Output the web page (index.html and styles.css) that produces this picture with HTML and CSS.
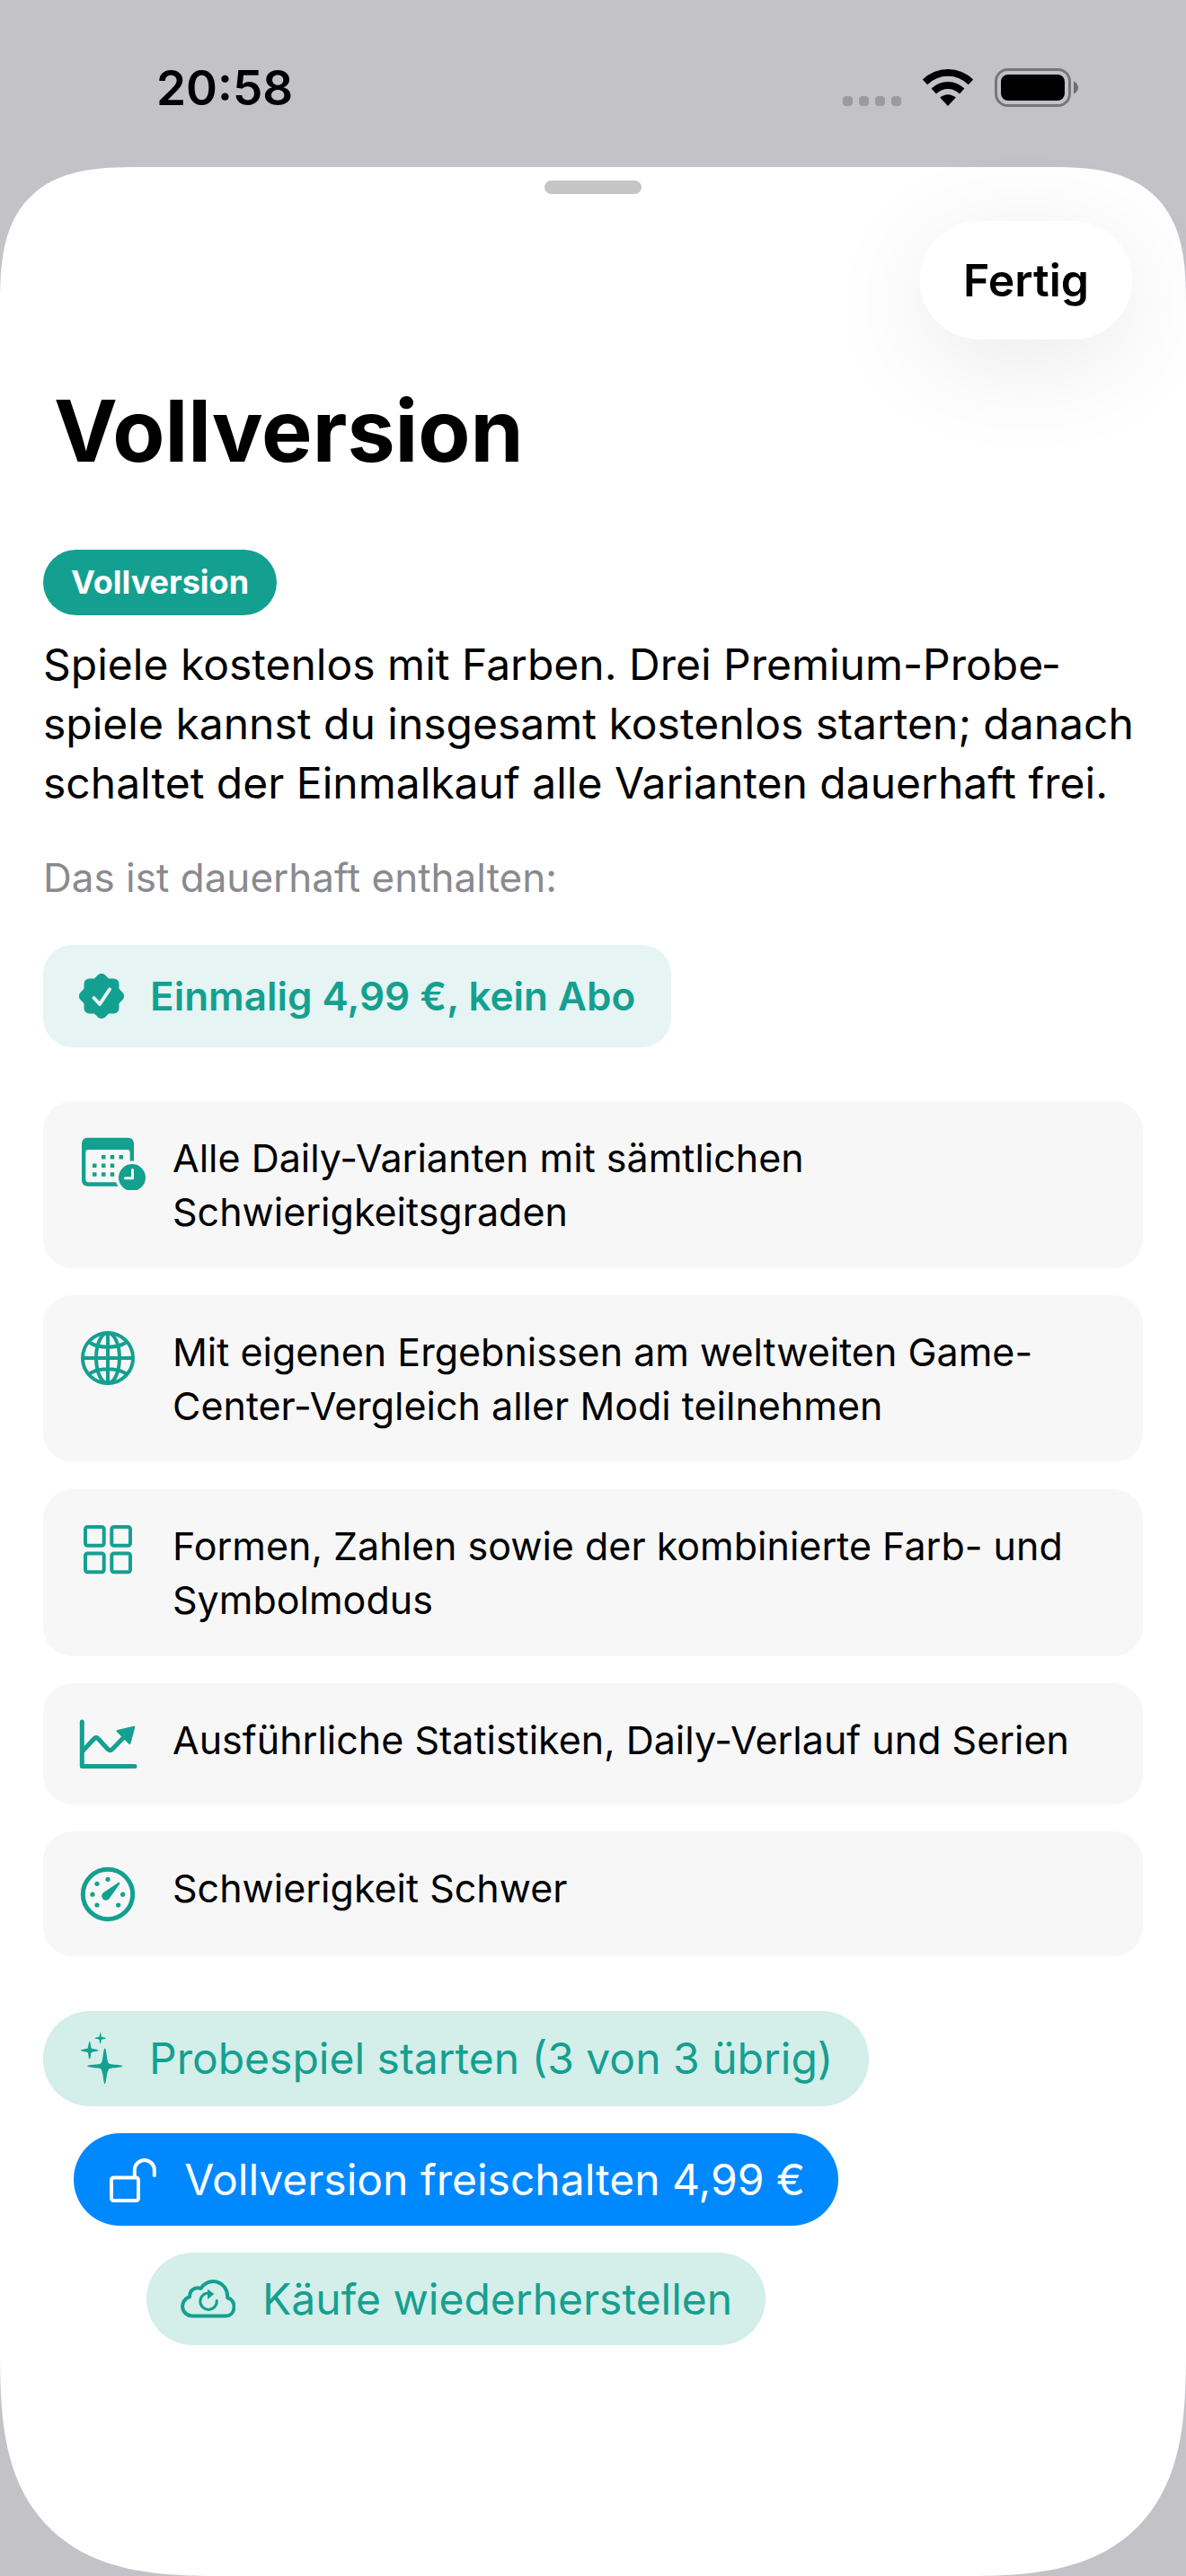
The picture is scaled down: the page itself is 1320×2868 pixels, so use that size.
FILE: index.html
```html
<!doctype html>
<html lang="de">
<head>
    <meta charset="UTF-8">
    <meta name="viewport" content="width=device-width, initial-scale=1">
    <title>Vollversion</title>
    <link rel="stylesheet" href="styles.css">
</head>
<body>
<div class="status-bar">
    <span class="time">20:58</span>
    <div class="status-icons">
        <svg class="dots" width="65" height="42" viewBox="0 0 65 42">
            <rect x="0" y="31" width="11" height="11" rx="4"/>
            <rect x="18" y="31" width="11" height="11" rx="4"/>
            <rect x="36" y="31" width="11" height="11" rx="4"/>
            <rect x="54" y="31" width="11" height="11" rx="4"/>
        </svg>
        <svg class="wifi" width="58" height="42" viewBox="0 0 58 42">
            <path d="M0.8 12.6A40 40 0 0 1 57.2 12.6L51.8 18.2A32.5 32.5 0 0 0 6.2 18.2Z"/>
            <path d="M10.6 22.6A26 26 0 0 1 47.4 22.6L42 28.4A18.5 18.5 0 0 0 16 28.4Z"/>
            <path d="M20.3 32.8A12.5 12.5 0 0 1 37.7 32.8L29 42Z"/>
        </svg>
        <svg class="battery" width="93" height="43" viewBox="0 0 93 43">
            <rect class="case" x="1.5" y="1.5" width="82" height="40" rx="13"/>
            <rect x="7" y="7" width="71" height="29" rx="8"/>
            <path class="tip" d="M88 14.5C94.5 17 94.5 26 88 28.5Z"/>
        </svg>
    </div>
</div>
<main class="sheet">
    <div class="grabber"></div>
    <div class="toolbar">
        <button type="button" class="done">Fertig</button>
    </div>
    <h1>Vollversion</h1>
    <div class="content">
        <span class="badge">Vollversion</span>
        <p class="intro">Spiele kostenlos mit Farben. Drei Premium-Probe&shy;spiele kannst du insgesamt kostenlos starten; danach schaltet der Einmalkauf alle Varianten dauerhaft frei.</p>
        <p class="hint">Das ist dauerhaft enthalten:</p>
        <div class="price">
            <svg width="50" height="50" viewBox="0 0 50 50">
                <rect x="5.5" y="5.5" width="39" height="39" rx="6"/>
                <rect x="5.5" y="5.5" width="39" height="39" rx="6" transform="rotate(45 25 25)"/>
                <path class="check" d="M16.5 27L23 34L34 17.5"/>
            </svg>
            <span>Einmalig 4,99 €, kein Abo</span>
        </div>
        <ul class="features">
            <li>
                <svg width="84" height="66" viewBox="0 0 84 66">
                    <path class="fill" fill-rule="evenodd" d="M14 7.7H58Q65 7.7 65 14.7V54.7Q65 61.7 58 61.7H14Q7 61.7 7 54.7V14.7Q7 7.7 14 7.7ZM14.5 21Q11.3 21 11.3 24.2V54Q11.3 57.2 14.5 57.2H57.5Q60.7 57.2 60.7 54V24.2Q60.7 21 57.5 21Z"/>
                    <path class="fill" d="M29 27h4.5v4.5h-4.5zM38.7 27h4.5v4.5h-4.5zM48.5 27h4.5v4.5h-4.5zM19 36.5h4.5v4.5h-4.5zM29 36.5h4.5v4.5h-4.5zM38.7 36.5h4.5v4.5h-4.5zM19 46.2h4.5v4.5h-4.5zM29 46.2h4.5v4.5h-4.5zM38.7 46.2h4.5v4.5h-4.5z"/>
                    <circle class="gap" cx="63" cy="52" r="18.5"/>
                    <circle class="fill" cx="63" cy="52" r="15"/>
                    <path class="hands" d="M63.5 43.5V52.8H55.5"/>
                </svg>
                <span>Alle Daily-Varianten mit sämtlichen Schwierigkeitsgraden</span>
            </li>
            <li>
                <svg width="84" height="69" viewBox="0 0 84 69">
                    <circle cx="36" cy="37" r="28"/>
                    <ellipse cx="36" cy="37" rx="13" ry="28"/>
                    <path d="M36 9V65M8 37H64M15.5 19.5C26 26.5 46 26.5 56.5 19.5M15.5 54.5C26 47.5 46 47.5 56.5 54.5"/>
                </svg>
                <span>Mit eigenen Ergebnissen am weltweiten Game-Center-Vergleich aller Modi teilnehmen</span>
            </li>
            <li>
                <svg width="84" height="66" viewBox="0 0 84 66">
                    <rect x="11" y="9" width="20.7" height="20.7" rx="2.5"/>
                    <rect x="40.3" y="9" width="20.7" height="20.7" rx="2.5"/>
                    <rect x="11" y="38.5" width="20.7" height="20.7" rx="2.5"/>
                    <rect x="40.3" y="38.5" width="20.7" height="20.7" rx="2.5"/>
                </svg>
                <span>Formen, Zahlen sowie der kombinierte Farb- und Symbolmodus</span>
            </li>
            <li>
                <svg width="84" height="69" viewBox="0 0 84 69">
                    <path class="bold" d="M7.3 10V59.5H66M8.5 42L20.5 29Q23 26.5 25.5 29L36 40.5Q38.5 42.8 41 40.5L56 25"/>
                    <path class="fill" d="M46.5 19L65 14.7Q66.5 14.5 66.3 16L61.5 34Q61 35.8 59.5 34.8L45.8 21Q45 19.5 46.5 19Z"/>
                </svg>
                <span>Ausführliche Statistiken, Daily-Verlauf und Serien</span>
            </li>
            <li>
                <svg width="84" height="73" viewBox="0 0 84 73">
                    <circle class="bold" cx="36" cy="37" r="27.7"/>
                    <g class="fill">
                        <circle cx="36" cy="20.3" r="2.6"/>
                        <circle cx="24" cy="25.3" r="2.6"/>
                        <circle cx="19" cy="37.2" r="2.6"/>
                        <circle cx="24" cy="49" r="2.6"/>
                        <circle cx="47.7" cy="49" r="2.6"/>
                        <circle cx="52.7" cy="37.2" r="2.6"/>
                        <path d="M48 23.8Q49.8 23.5 49.2 25.5L38.5 40.5A4.8 4.8 0 1 1 32 34.5Z"/>
                    </g>
                </svg>
                <span>Schwierigkeit Schwer</span>
            </li>
        </ul>
        <div class="actions">
            <button type="button" class="btn btn-trial">
                <svg width="48" height="60" viewBox="0 0 48 60">
                    <path class="fill" d="M28.7 18.5C30.8 18.5 30.5 34.5 33.5 35.5C34.5 36.8 48.2 36.5 48.2 38.3C48.2 40 34.5 40 33.5 41.2C30.5 43.5 30.5 58 28.7 58C27 58 27 43.5 24 41.2C22.5 40 9 40 9 38.3C9 36.5 22.5 36.8 24 35.5C27 33.5 26.8 18.5 28.7 18.5Z"/>
                    <path class="fill" d="M11.7 11C13 11 12.8 18 14 18.5C14.8 19.5 21.4 19.5 21.4 20.7C21.4 22 14.8 22 14 23C12.8 23.5 13 30.5 11.7 30.5C10.4 30.5 10.6 23.5 9.4 23C8.6 22 2 22 2 20.7C2 19.5 8.6 19.5 9.4 18.5C10.6 18 10.4 11 11.7 11Z"/>
                    <path class="fill" d="M23.7 1C24.5 1 24.4 5.3 25.2 5.7C25.6 6.3 29.8 6.2 29.8 7.2C29.8 8.2 25.6 8.1 25.2 8.7C24.4 9.1 24.5 13.3 23.7 13.3C22.9 13.3 23 9.1 22.2 8.7C21.8 8.1 17.6 8.2 17.6 7.2C17.6 6.2 21.8 6.3 22.2 5.7C23 5.3 22.9 1 23.7 1Z"/>
                </svg>
                <span>Probespiel starten (3 von 3 übrig)</span>
            </button>
            <button type="button" class="btn btn-buy">
                <svg width="56" height="60" viewBox="0 0 56 60">
                    <rect x="5" y="27.5" width="30" height="25.5" rx="2.5"/>
                    <path d="M30.8 27V19A11 11 0 0 1 52.8 19V25"/>
                </svg>
                <span>Vollversion freischalten 4,99 €</span>
            </button>
            <button type="button" class="btn">
                <svg width="62" height="60" viewBox="1 0 62 60">
                    <path d="M15 48.5A10.8 10.8 0 0 1 12 27.3C12 19.5 18 15.8 24.5 17.8C34 3.5 55 10 54.2 28.2C65 31 63.5 48.5 52 48.5Z"/>
                    <path class="thin" d="M33 23A9.2 9.2 0 1 0 42.2 31.5"/>
                    <path class="fill" d="M32 18.5L39.3 24L32 30Z"/>
                </svg>
                <span>Käufe wiederherstellen</span>
            </button>
        </div>
    </div>
</main>
</body>
</html>
```
FILE: styles.css
```css
* {
    margin: 0;
    padding: 0;
    box-sizing: border-box;
}
body {
    min-height: 100vh;
    display: flex;
    flex-direction: column;
    background: #c3c2c7;
    color: #000;
    font-family: Inter, "Liberation Sans", sans-serif;
}
button {
    border: none;
    font-family: inherit;
    cursor: pointer;
}
svg {
    display: block;
    flex: none;
}

/* status bar */
.status-bar {
    height: 186px;
    padding: 0 120px 0 174px;
    display: flex;
    align-items: center;
    justify-content: space-between;
}
.time {
    font-size: 53px;
    font-weight: 600;
    line-height: 66px;
    margin-top: 10px;
}
.status-icons {
    display: flex;
    gap: 23px;
    margin-top: 8px;
}
.dots {
    fill: #9b9b9e;
}
.battery .case {
    fill: none;
    stroke: #77777a;
    stroke-width: 3;
}
.battery .tip {
    fill: #6e6e71;
}

/* sheet */
.sheet {
    flex: 1;
    padding: 15px 48px 120px;
    background: #fff;
    border-radius: 114px 114px 186px 186px;
}
@supports (corner-shape: superellipse(1.5)) {
    .sheet {
        border-radius: 154px 154px 250px 250px;
        corner-shape: superellipse(1.5);
    }
}
.grabber {
    width: 108px;
    height: 15px;
    margin: 0 auto 30px;
    border-radius: 8px;
    background: #c5c5c6;
}
.toolbar {
    display: flex;
    justify-content: flex-end;
    padding: 0 12px;
}
.done {
    height: 132px;
    padding: 0 48px;
    border-radius: 66px;
    background: #fff;
    color: #000;
    font-size: 50px;
    font-weight: 600;
    box-shadow: 0 24px 120px rgba(0, 0, 0, 0.09);
}
h1 {
    margin: 42px 12px 72px;
    font-size: 95px;
    line-height: 120px;
    font-weight: 700;
}
.content {
    display: flex;
    flex-direction: column;
    align-items: flex-start;
}
.badge {
    padding: 15px 31px;
    border-radius: 37px;
    background: #14a090;
    color: #fff;
    font-size: 36px;
    line-height: 43px;
    font-weight: 700;
}
.intro {
    margin-top: 22px;
    font-size: 48px;
    line-height: 66px;
}
.hint {
    margin: 42px 0 45px;
    color: #8a8a8e;
    font-size: 44px;
    line-height: 60px;
}
.price {
    display: flex;
    align-items: center;
    gap: 29px;
    padding: 27px 40px;
    border-radius: 33px;
    background: #e6f4f3;
    color: #14a090;
    font-size: 44px;
    line-height: 60px;
    font-weight: 600;
}
.price svg {
    fill: #14a090;
}
.price .check {
    fill: none;
    stroke: #e6f4f3;
    stroke-width: 4;
    stroke-linecap: round;
    stroke-linejoin: round;
}

/* feature list */
.features {
    align-self: stretch;
    display: grid;
    gap: 30px;
    margin: 60px 0 61px;
    list-style-type: none;
}
.features li {
    display: flex;
    align-items: flex-start;
    gap: 24px;
    padding: 33px 36px;
    border-radius: 33px;
    background: #f7f7f7;
    font-size: 43px;
    line-height: 60px;
}
.features svg {
    fill: none;
    stroke: #14a090;
    stroke-width: 4;
}
.features .bold {
    stroke-width: 5;
    stroke-linecap: round;
    stroke-linejoin: round;
}
.features .fill {
    fill: #14a090;
    stroke: none;
}
.features .gap {
    fill: #f7f7f7;
    stroke: none;
}
.features .hands {
    stroke: #f7f7f7;
    stroke-width: 3;
    stroke-linecap: round;
    stroke-linejoin: round;
}

/* buttons */
.actions {
    display: flex;
    flex-direction: column;
    align-items: center;
    gap: 30px;
}
.btn {
    display: flex;
    align-items: center;
    gap: 30px;
    height: 103px;
    padding: 0 37px;
    border-radius: 52px;
    background: #d4eeea;
    color: #14a090;
    font-size: 48px;
    line-height: 66px;
}
.btn svg {
    fill: none;
    stroke: currentColor;
    stroke-width: 4;
    stroke-linecap: round;
    stroke-linejoin: round;
}
.btn .thin {
    stroke-width: 3;
}
.btn .fill {
    fill: currentColor;
    stroke: none;
}
.btn-trial {
    height: 106px;
    padding: 0 40px;
}
.btn-buy {
    background: #0088ff;
    color: #fff;
}
```
